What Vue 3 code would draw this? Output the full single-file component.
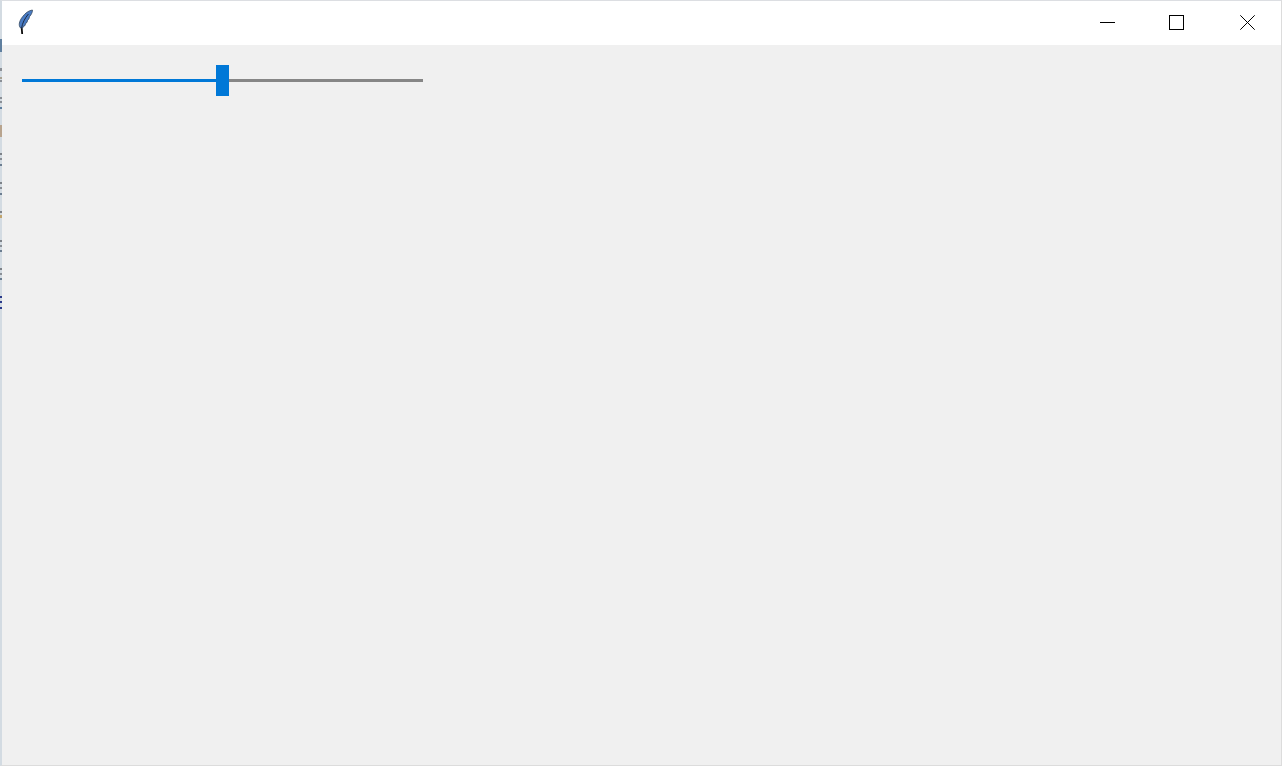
<script setup>
// marcas de la ventana que queda detrás, visibles en el borde izquierdo
const marks = [
  { top: 39, height: 13, color: '#5f7f9f' },
  { top: 68, height: 3, color: '#8a8f96' },
  { top: 77, height: 2, color: '#a8a294' },
  { top: 80, height: 2, color: '#8a8f96' },
  { top: 97, height: 2, color: '#8a8f96' },
  { top: 101, height: 2, color: '#8a8f96' },
  { top: 107, height: 2, color: '#5f7f9f' },
  { top: 125, height: 12, color: '#b8a48e' },
  { top: 153, height: 2, color: '#7d8288' },
  { top: 158, height: 2, color: '#8a8f96' },
  { top: 164, height: 2, color: '#6b7d90' },
  { top: 182, height: 2, color: '#7d8288' },
  { top: 187, height: 2, color: '#8a8f96' },
  { top: 193, height: 2, color: '#6b7d90' },
  { top: 211, height: 2, color: '#7d8288' },
  { top: 215, height: 3, color: '#c0a46e' },
  { top: 240, height: 2, color: '#7d8288' },
  { top: 245, height: 2, color: '#8a8f96' },
  { top: 250, height: 2, color: '#6b7d90' },
  { top: 268, height: 2, color: '#7d8288' },
  { top: 273, height: 2, color: '#8a8f96' },
  { top: 278, height: 2, color: '#6b7d90' },
  { top: 296, height: 2, color: '#2a3a8a' },
  { top: 301, height: 2, color: '#2a3a8a' },
  { top: 307, height: 2, color: '#2a3a8a' }
]
</script>

<template>
  <div class="window">
    <div class="edge-marks">
      <span
        v-for="mark in marks"
        :key="mark.top"
        class="edge-mark"
        :style="{ top: mark.top + 'px', height: mark.height + 'px', background: mark.color }"
      ></span>
    </div>

    <header class="titlebar">
      <svg class="app-icon" width="24" height="30" viewBox="0 0 24 30">
        <path d="M8.2 28 L7.6 21" stroke="#0c0c0c" stroke-width="1.8" fill="none" />
        <path
          d="M18.4 4 C15 4.6 12.4 6.4 10.4 8.6 C8 11.2 6 14 5.4 17 C5 19 5.4 20.8 6.6 22 L8.6 22 L9.6 20.2 L11 19.6 L11.6 17.4 L13 16.4 L13.6 14.2 L15 12.8 L15.4 10.8 L16.8 9 C17.8 7.4 18.6 5.6 18.4 4 Z"
          fill="#4a7cc4"
          stroke="#33475f"
          stroke-width="0.8"
        />
        <path d="M7.6 22 C8.4 17 10.6 12.6 14.4 8" stroke="#1a2a44" stroke-width="1" fill="none" />
      </svg>

      <div class="window-controls">
        <svg class="control" width="15" height="15" viewBox="0 0 15 15" shape-rendering="crispEdges">
          <path d="M0 7.5 H15" stroke="#000" />
        </svg>
        <svg class="control maximize" width="15" height="15" viewBox="0 0 15 15" shape-rendering="crispEdges">
          <rect x="0.5" y="0.5" width="14" height="14" fill="none" stroke="#000" />
        </svg>
        <svg class="control close" width="15" height="15" viewBox="0 0 15 15">
          <path d="M0.3 0.3 L14.7 14.7 M14.7 0.3 L0.3 14.7" stroke="#000" stroke-width="1" fill="none" />
        </svg>
      </div>
    </header>

    <main class="content">
      <div class="scale">
        <div class="track track-filled"></div>
        <div class="thumb"></div>
        <div class="track track-rest"></div>
      </div>
    </main>
  </div>
</template>

<style scoped>
.window {
  position: relative;
  display: flex;
  flex-direction: column;
  height: 766px;
  box-sizing: border-box;
  border-top: 1px solid #dcdee2;
  border-left: 2px solid #d3dbe2;
  border-right: 1px solid #dcdcdc;
  border-bottom: 1px solid #dcdcdc;
  background: #f0f0f0;
}

.edge-marks {
  position: absolute;
  top: -1px;
  left: -2px;
  width: 2px;
  height: 320px;
}
.edge-mark {
  position: absolute;
  left: 0;
  width: 2px;
}

/* Barra de título */
.titlebar {
  display: flex;
  align-items: flex-start;
  justify-content: space-between;
  box-sizing: border-box;
  height: 44px;
  padding: 14px 26px 0 0;
  background: #fff;
}
.app-icon {
  margin: -9px 0 0 12px;
}
.window-controls {
  display: flex;
}
.control {
  display: block;
}
.maximize {
  margin-left: 54px;
}
.close {
  margin-left: 56px;
}

/* Contenido */
.content {
  flex: 1;
  padding: 20px 0 0 20px;
}

/* Control deslizante */
.scale {
  display: flex;
  align-items: center;
  width: 401px;
}
.track {
  width: 194px;
  height: 3px;
}
.track-filled {
  background: #0078d7;
}
.track-rest {
  background: #868686;
}
.thumb {
  width: 13px;
  height: 31px;
  background: #0078d7;
}
</style>

<style>
html,
body {
  margin: 0;
  background: #f0f0f0;
}
</style>
